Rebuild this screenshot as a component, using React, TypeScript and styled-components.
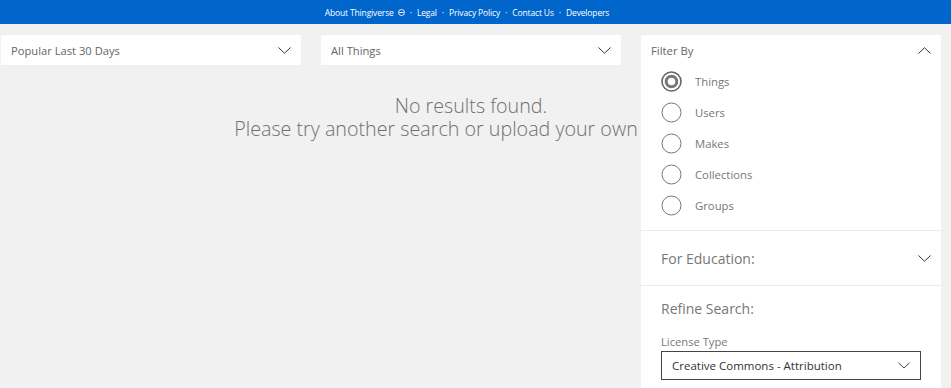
import React, { useState } from 'react';
import styled, { createGlobalStyle } from 'styled-components';

const GlobalStyle = createGlobalStyle`
  * { box-sizing: border-box; }
  body {
    margin: 0;
    background: #f1f1f1;
    font-family: 'Open Sans', 'Noto Sans', sans-serif;
    color: #666;
  }
`;

const Page = styled.div`
  min-height: 100vh;
  display: flex;
  flex-direction: column;
  overflow: hidden;
`;

const TopBar = styled.nav`
  height: 24px;
  flex-shrink: 0;
  background: #0066cc;
  display: flex;
  justify-content: center;
  align-items: center;
  gap: 5px;
  padding-right: 17px;
  font-size: 8.5px;
  letter-spacing: -0.15px;
  color: #fff;

  a {
    color: #fff;
    text-decoration: none;
    display: inline-flex;
    align-items: center;
    gap: 4px;
  }
`;

const Dot = styled.span`
  font-size: 9px;
`;

const Body = styled.div`
  flex: 1;
  display: flex;
  gap: 20px;
  padding: 11px 10px 0 1px;
`;

const Main = styled.div`
  width: 620px;
  display: flex;
  flex-direction: column;
`;

const DropdownRow = styled.div`
  display: flex;
  gap: 20px;
`;

const Dropdown = styled.button`
  width: 300px;
  height: 30px;
  border: 0;
  background: #fff;
  display: flex;
  align-items: center;
  justify-content: space-between;
  padding: 0 10px 0 10px;
  font: inherit;
  font-size: 11.2px;
  color: #666;
  cursor: pointer;
`;

/* spans the main column, the gap and the panel so the lines centre on the whole row */
const Message = styled.div`
  margin-top: 29px;
  margin-right: -320px;
  font-size: 19.7px;
  font-weight: 300;
  line-height: 23px;
  color: #707070;
  white-space: nowrap;
`;

const MessageLine = styled.div<{ $cut?: number }>`
  text-align: center;
  padding-right: ${(p) => p.$cut ?? 0}px;
`;

const Panel = styled.aside`
  position: relative;
  z-index: 1;
  width: 300px;
  background: #fff;
  display: flex;
  flex-direction: column;
`;

const Section = styled.section`
  border-bottom: 1px solid #ebebeb;
`;

const FilterHead = styled.div`
  height: 31px;
  display: flex;
  align-items: center;
  justify-content: space-between;
  padding: 0 10px 0 10px;
  font-size: 11.3px;
  color: #666;
`;

const RadioList = styled.div`
  padding: 0 20px 9px 20px;
  display: flex;
  flex-direction: column;
`;

const RadioRow = styled.label`
  height: 31px;
  display: flex;
  align-items: center;
  gap: 13px;
  font-size: 11.3px;
  color: #777;
  cursor: pointer;
`;

const SectionHead = styled.div`
  height: 54px;
  display: flex;
  align-items: center;
  justify-content: space-between;
  padding: 0 10px 0 20px;
  font-size: 14px;
  color: #777;
`;

const Refine = styled.div`
  padding: 12px 20px 0 20px;
`;

const RefineTitle = styled.div`
  font-size: 14px;
  color: #777;
  height: 22px;
  line-height: 22px;
`;

const FieldLabel = styled.div`
  margin-top: 14px;
  font-size: 11.2px;
  color: #777;
  line-height: 16px;
`;

const Select = styled.div`
  margin-top: 1px;
  width: 260px;
  height: 29px;
  border: 1px solid #444;
  display: flex;
  align-items: center;
  justify-content: space-between;
  padding: 0 10px 0 10px;
  font-size: 11.5px;
  color: #333;
`;

const Chevron = ({ up = false, width = 13 }: { up?: boolean; width?: number }) => (
  <svg width={width} height={7} viewBox="0 0 13 7" fill="none">
    <path
      d={up ? 'M0.5 6.5 L6.5 0.8 L12.5 6.5' : 'M0.5 0.5 L6.5 6.2 L12.5 0.5'}
      stroke="#333"
      strokeWidth="1"
    />
  </svg>
);

const Radio = ({ checked }: { checked: boolean }) => (
  <svg width={21} height={21} viewBox="0 0 21 21">
    <circle cx="10.5" cy="10.5" r="9.5" fill="#fff" stroke={checked ? '#666' : '#777'} strokeWidth={checked ? 1.6 : 1} />
    {checked && <circle cx="10.5" cy="10.5" r="5.3" fill="#fff" stroke="#777" strokeWidth="3" />}
  </svg>
);

const InfoIcon = () => (
  <svg width={7} height={7} viewBox="0 0 7 7" fill="none">
    <circle cx="3.5" cy="3.5" r="3" stroke="#fff" strokeWidth="0.9" />
    <path d="M1.2 3.5 H5.8" stroke="#fff" strokeWidth="0.9" />
  </svg>
);

const filters = ['Things', 'Users', 'Makes', 'Collections', 'Groups'];

const App: React.FC = () => {
  const [filter, setFilter] = useState('Things');

  return (
    <Page>
      <GlobalStyle />
      <TopBar>
        <a href="#">
          About Thingiverse <InfoIcon />
        </a>
        <Dot>·</Dot>
        <a href="#">Legal</a>
        <Dot>·</Dot>
        <a href="#">Privacy Policy</a>
        <Dot>·</Dot>
        <a href="#">Contact Us</a>
        <Dot>·</Dot>
        <a href="#">Developers</a>
      </TopBar>
      <Body>
        <Main>
          <DropdownRow>
            <Dropdown type="button">
              Popular Last 30 Days
              <Chevron />
            </Dropdown>
            <Dropdown type="button">
              All Things
              <Chevron />
            </Dropdown>
          </DropdownRow>
          <Message>
            <MessageLine>No results found.</MessageLine>
            <MessageLine $cut={70}>Please try another search or upload your own</MessageLine>
          </Message>
        </Main>
        <Panel>
          <Section>
            <FilterHead>
              Filter By
              <Chevron up />
            </FilterHead>
            <RadioList>
              {filters.map((f) => (
                <RadioRow key={f} onClick={() => setFilter(f)}>
                  <Radio checked={f === filter} />
                  {f}
                </RadioRow>
              ))}
            </RadioList>
          </Section>
          <Section>
            <SectionHead>
              For Education:
              <Chevron />
            </SectionHead>
          </Section>
          <Refine>
            <RefineTitle>Refine Search:</RefineTitle>
            <FieldLabel>License Type</FieldLabel>
            <Select>
              Creative Commons - Attribution
              <Chevron width={12} />
            </Select>
          </Refine>
        </Panel>
      </Body>
    </Page>
  );
};

export default App;
